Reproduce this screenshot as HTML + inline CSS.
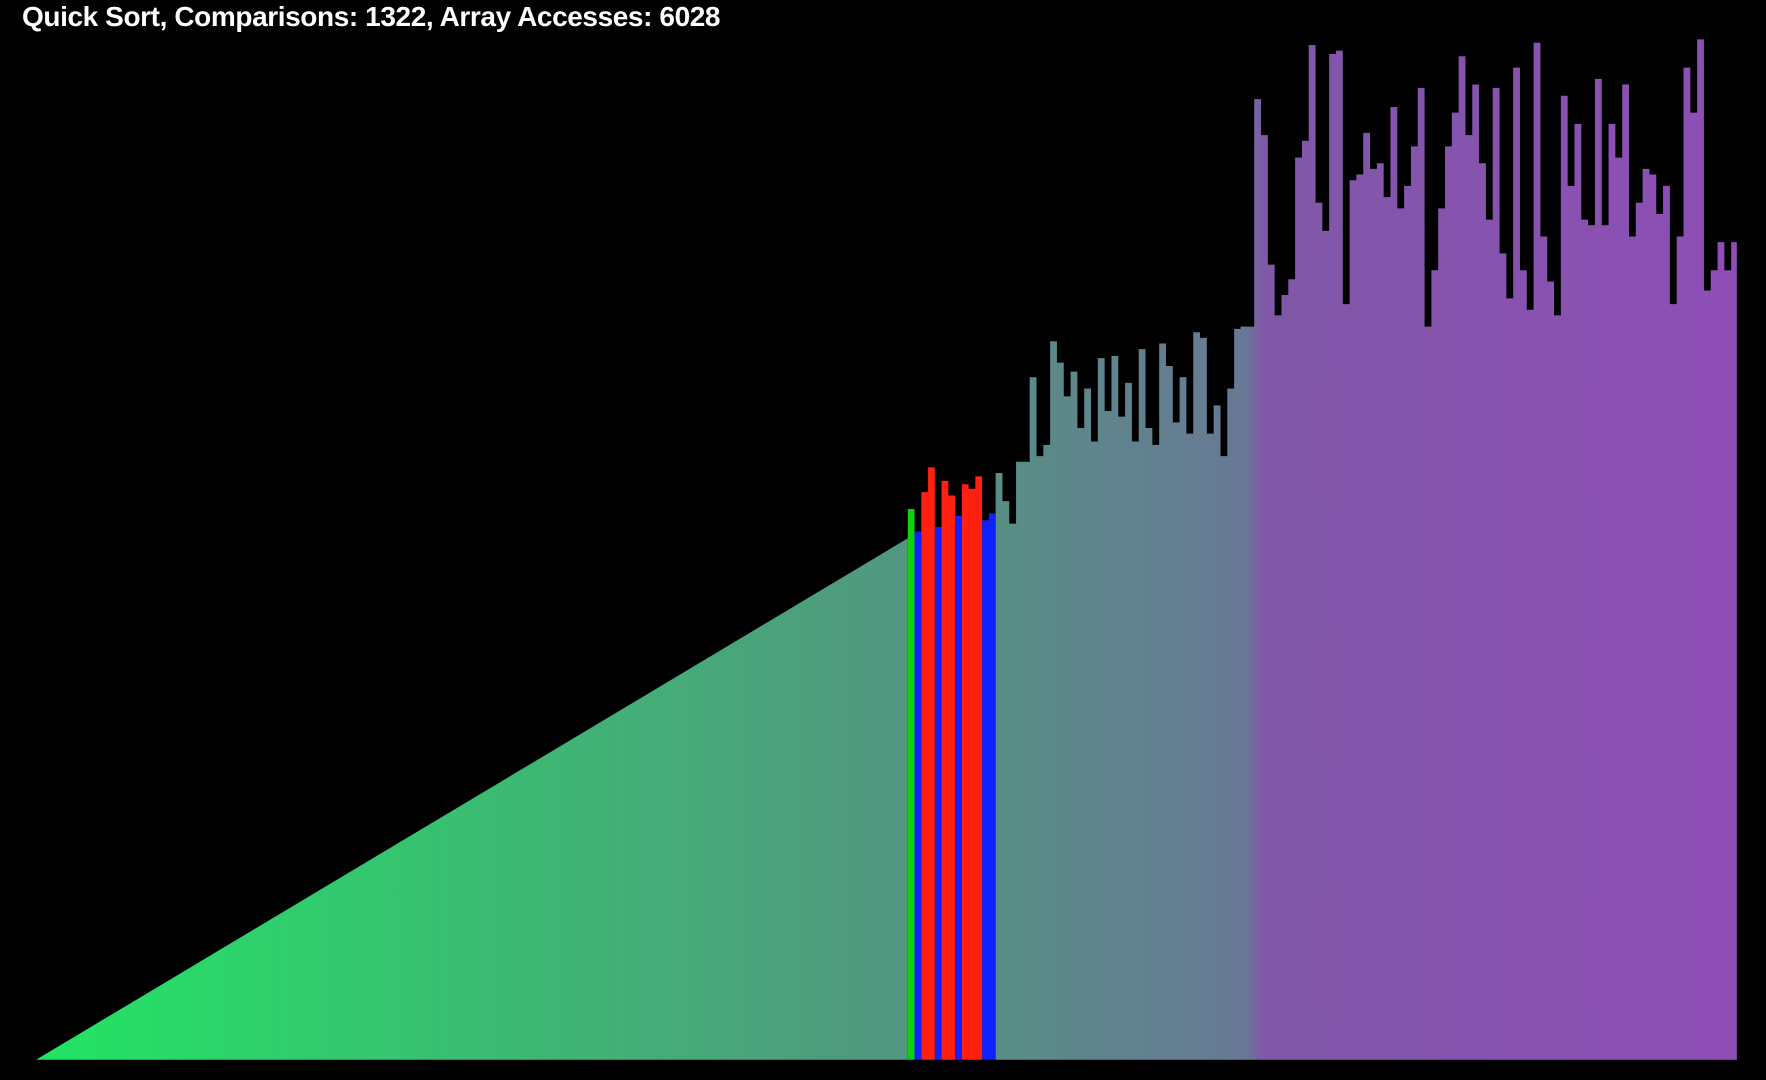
<!DOCTYPE html>
<html><head><meta charset="utf-8"><style>
html,body{margin:0;padding:0;background:#000;width:1766px;height:1080px;overflow:hidden}
#t{position:absolute;left:22px;top:0px;color:#fff;font:bold 28px "Liberation Sans",sans-serif;letter-spacing:-0.4px;line-height:34px}
svg{position:absolute;left:0;top:0}
</style></head><body>
<svg width="1766" height="1080" viewBox="0 0 1568 959" preserveAspectRatio="none">
<defs>
<linearGradient id="g" gradientUnits="userSpaceOnUse" x1="32" y1="0" x2="1545" y2="0">
<stop offset="0" stop-color="rgb(34,228,100)"/>
<stop offset="0.51" stop-color="rgb(82,150,128)"/>
<stop offset="0.71" stop-color="rgb(104,120,150)"/>
<stop offset="0.72" stop-color="rgb(128,88,168)"/>
<stop offset="1" stop-color="rgb(142,78,182)"/>
</linearGradient>
</defs>
<path fill="url(#g)" d="M32 941 L806 478 V941 Z"/>
<path fill="url(#g)" d="M884 941 V420 h6.05 V445 h6.05 V465 h6.05 V410 h6.05 V410 h6.05 V335 h6.05 V405 h6.05 V395 h6.05 V303 h6.05 V322 h6.05 V352 h6.05 V330 h6.05 V380 h6.05 V345 h6.05 V392 h6.05 V318 h6.05 V365 h6.05 V316 h6.05 V370 h6.05 V340 h6.05 V392 h6.05 V310 h6.05 V380 h6.05 V395 h6.05 V305 h6.05 V325 h6.05 V375 h6.05 V335 h6.05 V385 h6.05 V295 h6.05 V300 h6.05 V385 h6.05 V360 h6.05 V405 h6.05 V345 h6.05 V292 h6.05 V941 Z"/>
<path fill="url(#g)" d="M1101.5 941 V290 h6.05 V290 h6.05 V88 h6.05 V120 h6.05 V235 h6.05 V280 h6.05 V262 h6.05 V248 h6.05 V140 h6.05 V125 h6.05 V40 h6.05 V180 h6.05 V205 h6.05 V48 h6.05 V45 h6.05 V270 h6.05 V160 h6.05 V155 h6.05 V118 h6.05 V150 h6.05 V145 h6.05 V175 h6.05 V95 h6.05 V185 h6.05 V165 h6.05 V130 h6.05 V78 h6.05 V290 h6.05 V240 h6.05 V185 h6.05 V130 h6.05 V100 h6.05 V50 h6.05 V120 h6.05 V75 h6.05 V145 h6.05 V195 h6.05 V78 h6.05 V225 h6.05 V265 h6.05 V60 h6.05 V240 h6.05 V275 h6.05 V38 h6.05 V210 h6.05 V250 h6.05 V280 h6.05 V85 h6.05 V165 h6.05 V110 h6.05 V195 h6.05 V200 h6.05 V70 h6.05 V200 h6.05 V110 h6.05 V140 h6.05 V75 h6.05 V210 h6.05 V180 h6.05 V150 h6.05 V155 h6.05 V190 h6.05 V165 h6.05 V270 h6.05 V210 h6.05 V60 h6.05 V100 h6.05 V35 h6.05 V258 h6.05 V240 h6.05 V215 h6.05 V240 h6.05 V215 h5 V941 Z"/>
<rect x="806" y="452" width="6" height="489" fill="#10d010"/>
<path fill="#1020ff" d="M812 941 V472 h6 V941 Z M830 941 V468 h6 V941 Z M848 941 V458 h6 V941 Z M872 941 V462 h6 V456 h6 V941 Z"/>
<path fill="#ff2010" d="M818 941 V437 h6 V415 h6 V941 Z M836 941 V427 h6 V440 h6 V941 Z M854 941 V430 h6 V434 h6 V423 h6 V941 Z"/>
</svg>
<div id="t">Quick Sort, Comparisons: 1322, Array Accesses: 6028</div>
</body></html>
